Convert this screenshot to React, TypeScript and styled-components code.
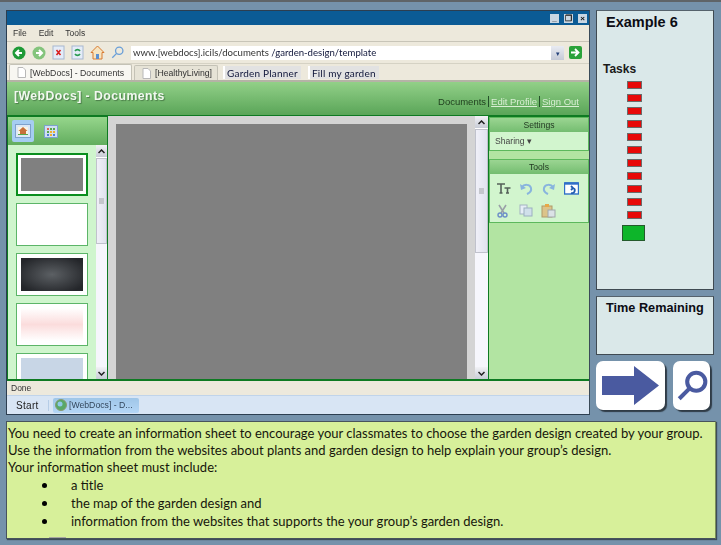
import React from 'react'
import styled, { createGlobalStyle } from 'styled-components'

const GlobalStyle = createGlobalStyle`
  html, body {
    margin: 0;
    padding: 0;
    background: #7592ab;
    overflow: hidden;
  }
`

const ui = '"Liberation Sans", Arial, sans-serif'
const body = 'Lato, "Noto Sans", sans-serif'

const Page = styled.div`
  width: 721px;
  height: 545px;
  box-sizing: border-box;
  border-top: 2px solid #5f6468;
  padding: 8px 0 0 6px;
  display: flex;
  flex-direction: column;
  gap: 6px;
  position: relative;
  font-family: ${ui};
`
const TopRow = styled.div`
  display: flex;
  gap: 6px;
  height: 405px;
`
const Win = styled.section`
  width: 584px;
  box-sizing: border-box;
  border: 1px solid #2c3e50;
  border-right-color: #3a4a58;
  display: flex;
  flex-direction: column;
  background: #ede9dc;
  filter: blur(0.3px);
`
const TitleBar = styled.div`
  height: 14px;
  background: #0b5b95;
  display: flex;
  justify-content: flex-end;
  align-items: center;
  gap: 5px;
  padding-right: 2px;
`
const WinBtn = styled.div`
  width: 9px;
  height: 9px;
  background: #c9d6e2;
  color: #111;
  font-size: 8px;
  font-weight: bold;
  line-height: 9px;
  text-align: center;
`
const MenuBar = styled.div`
  height: 16px;
  display: flex;
  align-items: center;
  gap: 12px;
  padding-left: 6px;
  font-size: 8.5px;
  color: #333;
  border-bottom: 1px solid #c8c5b8;
`
const ToolBar = styled.div`
  height: 21px;
  display: flex;
  align-items: center;
  padding-left: 5px;
  border-bottom: 1px solid #d5d2c4;
`
const ToolIcons = styled.div`
  display: flex;
  gap: 6px;
  align-items: center;
  width: 119px;
`
const Address = styled.div`
  width: 433px;
  height: 14px;
  background: #fff;
  font-family: ${body};
  font-size: 9.6px;
  color: #333;
  line-height: 14px;
  padding-left: 2px;
  box-sizing: border-box;
  position: relative;
  white-space: pre;
`
const AddressPath = styled.span`
  color: #10163a;
`
const Drop = styled.div`
  position: absolute;
  right: 0;
  top: 0;
  width: 13px;
  height: 14px;
  background: linear-gradient(#e8ebf2, #c5cad6);
  color: #23407a;
  font-size: 7px;
  line-height: 14px;
  text-align: center;
`
const Go = styled.div`
  margin-left: 5px;
  width: 13px;
  height: 13px;
  background: #2aa23a;
  border-radius: 2px;
  display: flex;
  align-items: center;
  justify-content: center;
`
const TabRow = styled.div`
  height: 16px;
  display: flex;
  align-items: flex-end;
  padding-left: 2px;
  border-bottom: 2px solid #b5b3a6;
`
const Tab = styled.div<{ $active?: boolean }>`
  height: ${p => (p.$active ? 16 : 15)}px;
  width: ${p => (p.$active ? 123 : 84)}px;
  margin-right: ${p => (p.$active ? 2 : 3)}px;
  box-sizing: border-box;
  background: ${p => (p.$active ? '#f8f7f2' : '#e6e3d6')};
  border: 1px solid #c4c2b6;
  border-bottom: none;
  border-radius: 2px 2px 0 0;
  display: flex;
  align-items: center;
  gap: 4px;
  padding-left: 7px;
  font-size: 8.7px;
  color: #333;
`
const PlainTab = styled.div<{ $ml: number }>`
  margin-left: ${p => p.$ml}px;
  height: 13px;
  margin-bottom: 1px;
  box-sizing: border-box;
  background: #e2e2e2;
  border-left: 2px solid #fff;
  font-family: ${body};
  font-size: 10px;
  line-height: 14px;
  padding: 0 3px 0 2px;
  color: #10163a;
  letter-spacing: 0.2px;
  white-space: nowrap;
`
const Header = styled.header`
  height: 34px;
  background: linear-gradient(#92d088, #5aa558);
  border-bottom: 1px solid #0e7a22;
  display: flex;
  justify-content: space-between;
  padding: 7px 8px 0 7px;
  box-sizing: border-box;
`
const HeaderTitle = styled.h1`
  margin: 0;
  font-size: 12.3px;
  font-weight: bold;
  color: #f2f8f0;
  letter-spacing: 0.42px;
  text-shadow: 1px 1px 1px #4a7d48;
`
const HeaderLinks = styled.nav`
  display: flex;
  align-items: center;
  align-self: flex-end;
  margin-bottom: 8px;
  font-size: 9.5px;
`
const HeaderLink = styled.span<{ $current?: boolean }>`
  color: ${p => (p.$current ? '#20401f' : '#d9efd4')};
  text-decoration: ${p => (p.$current ? 'none' : 'underline')};
  padding: 0 2px;
  & + & {
    border-left: 1px solid #24502a;
  }
`
const Main = styled.main`
  height: 263px;
  display: flex;
  border-bottom: 2px solid #0e7a22;
  overflow: hidden;
  background: #b2e4a2;
`
const LeftPanel = styled.aside`
  width: 101px;
  box-sizing: border-box;
  border: 1px solid #0e7a22;
  border-bottom: none;
  display: flex;
  flex-direction: column;
`
const LeftTools = styled.div`
  height: 28px;
  flex: none;
  background: linear-gradient(#96d68c, #62ad5e);
  display: flex;
  align-items: center;
  gap: 10px;
  padding-left: 4px;
`
const ToolActive = styled.div`
  width: 22px;
  height: 22px;
  border-radius: 2px;
  background: #a6cdf2;
  display: flex;
  align-items: center;
  justify-content: center;
`
const LeftBody = styled.div`
  flex: 1;
  display: flex;
  min-height: 0;
  background: #cff5cd;
`
const Thumbs = styled.div`
  width: 88px;
  padding: 8px 0 0 8px;
  box-sizing: border-box;
  overflow: hidden;
  display: flex;
  flex-direction: column;
  gap: 7px;
`
const Thumb = styled.div<{ $selected?: boolean }>`
  width: 72px;
  height: 43px;
  flex: none;
  box-sizing: border-box;
  background: #fff;
  border: ${p => (p.$selected ? '2px solid #0a8f1e' : '1px solid #5cb568')};
  padding: ${p => (p.$selected ? '3px 3px' : '4px')};
  display: flex;
`
const ThumbArt = styled.div<{ $bg: string }>`
  flex: 1;
  background: ${p => p.$bg};
`
const Scroll = styled.div<{ $w: number }>`
  width: ${p => p.$w}px;
  flex: none;
  background: #fff;
  display: flex;
  flex-direction: column;
`
const ScrollBtn = styled.div`
  height: 12px;
  flex: none;
  background: linear-gradient(#f2f2f6, #c8ccd6);
  display: flex;
  align-items: center;
  justify-content: center;
`
const ScrollThumb = styled.div<{ $h: number }>`
  height: ${p => p.$h}px;
  flex: none;
  margin-top: 1px;
  box-sizing: border-box;
  background: linear-gradient(90deg, #f0f0f8, #e0e2ee);
  border: 1px solid #c0c2cc;
  display: flex;
  align-items: center;
  justify-content: center;
`
const Grip = styled.div`
  width: 5px;
  height: 6px;
  background: #c4c6cc;
`
const Spacer = styled.div`
  flex: 1;
  background: #f6f6fc;
`
const Center = styled.div`
  flex: 1;
  display: flex;
  background: #d4d4d4;
`
const Canvas = styled.div`
  flex: 1;
  margin: 8px 8px 0;
  background: #808080;
`
const RightPanel = styled.aside`
  width: 101px;
  box-sizing: border-box;
  border-left: 1px solid #0e7a22;
  border-top: 1px solid #0e7a22;
  display: flex;
  flex-direction: column;
  gap: 8px;
`
const Box = styled.div<{ $h: number }>`
  height: ${p => p.$h}px;
  box-sizing: border-box;
  border: 1px solid #5cb85c;
  background: #d2f5ce;
`
const BoxHead = styled.div`
  height: 14px;
  background: linear-gradient(#9bd592, #74bd70);
  font-size: 8.6px;
  line-height: 14px;
  text-align: center;
  color: #233a23;
`
const Sharing = styled.div`
  padding: 4px 0 0 5px;
  font-size: 8.6px;
  color: #444;
`
const ToolGrid = styled.div`
  display: grid;
  grid-template-columns: repeat(4, 15px);
  column-gap: 7.5px;
  row-gap: 8px;
  padding: 8px 0 0 6px;
`
const Status = styled.div`
  height: 14px;
  font-size: 8.5px;
  line-height: 14px;
  padding-left: 4px;
  color: #333;
  border-bottom: 1px solid #c0d4ea;
`
const Taskbar = styled.footer`
  flex: 1;
  background: #d8e5f4;
  display: flex;
  align-items: center;
  padding-left: 9px;
  font-size: 10px;
  color: #222;
`
const Start = styled.span`
  width: 32px;
  letter-spacing: 0.3px;
  border-right: 1px solid #b6cde6;
  margin-right: 4px;
`
const TaskBtn = styled.div`
  width: 86px;
  height: 15px;
  background: linear-gradient(#9fc6e8, #b4d6f6);
  border-radius: 2px;
  display: flex;
  align-items: center;
  gap: 2px;
  padding-left: 2px;
  box-sizing: border-box;
  font-size: 8.7px;
  color: #33475c;
`
const Side = styled.div`
  width: 118px;
  display: flex;
  flex-direction: column;
  gap: 6px;
`
const SidePanel = styled.div<{ $h: number }>`
  height: ${p => p.$h}px;
  box-sizing: border-box;
  background: #dae8e9;
  border: 1px solid #3f4a52;
  border-top-color: #55626c;
`
const ExampleTitle = styled.h2`
  margin: 3px 0 0 9px;
  font-size: 14.5px;
  color: #0c0c14;
`
const TasksLabel = styled.div`
  margin: 32px 0 0 6px;
  font-size: 12px;
  font-weight: bold;
  color: #1a1a1a;
`
const Bars = styled.div`
  margin: 5px 0 0 30px;
  display: flex;
  flex-direction: column;
  gap: 5px;
`
const Bar = styled.div`
  width: 15px;
  height: 8px;
  box-sizing: border-box;
  background: #e80808;
  border: 1px solid #6a6a6a;
`
const GreenBlock = styled.div`
  width: 23px;
  height: 16px;
  box-sizing: border-box;
  margin: 6px 0 0 25px;
  background: #0db52a;
  border: 1px solid #245a2c;
`
const TimeTitle = styled.div`
  margin: 4px 0 0 9px;
  font-size: 12.7px;
  font-weight: bold;
  color: #0c0c14;
`
const ButtonRow = styled.div`
  display: flex;
  gap: 8px;
`
const SquareBtn = styled.button<{ $w: number }>`
  width: ${p => p.$w}px;
  height: 49px;
  padding: 0;
  border: none;
  border-radius: 7px;
  background: #fff;
  box-shadow: 2px 2px 1px #2f3b46;
  display: flex;
  align-items: center;
  justify-content: center;
`
const Instructions = styled.section`
  width: 710px;
  height: 118px;
  box-sizing: border-box;
  background: #d7f09a;
  border: 1px solid #47535c;
  border-right-color: #7a8f5a;
  box-shadow: 1px 1px 1px #3e4c58;
  padding: 3px 0 0 1px;
  font-family: ${body};
  font-size: 13px;
  line-height: 17px;
  color: #16160c;
  position: relative;
`
const Line = styled.p`
  margin: 0;
  white-space: nowrap;
`
const BulletList = styled.ul`
  list-style: none;
  margin: 0;
  padding: 0;
`
const BulletItem = styled.li`
  height: 18px;
  line-height: 18px;
  display: flex;
  align-items: center;
`
const Dot = styled.span`
  width: 5px;
  height: 5px;
  border-radius: 50%;
  background: #000;
  margin: 0 24px 0 34px;
`
const Mark = styled.div`
  position: absolute;
  left: 42px;
  bottom: 0;
  width: 17px;
  height: 1px;
  background: #a8a8a0;
`

const PageIcon = () => (
  <svg width="9" height="11" viewBox="0 0 9 11">
    <path d="M1 .5h5l2.5 2.5v7.5H1z" fill="#fff" stroke="#b8b8b8" />
  </svg>
)

const Chevron = ({ up }: { up?: boolean }) => (
  <svg width="7" height="5" viewBox="0 0 7 5">
    <path d={up ? 'M.5 4l3-3 3 3' : 'M.5 1l3 3 3-3'} fill="none" stroke="#222" strokeWidth="1.5" />
  </svg>
)

const NavCircle = ({ fill, flip }: { fill: string; flip?: boolean }) => (
  <svg width="14" height="14" viewBox="0 0 14 14">
    <circle cx="7" cy="7" r="6.5" fill={fill} />
    <path d={flip ? 'M4 7h5M7 4l3 3-3 3' : 'M10 7H5M7 4L4 7l3 3'} fill="none" stroke="#fff" strokeWidth="2" />
  </svg>
)

const DocIcon = ({ color, glyph }: { color: string; glyph: string }) => (
  <svg width="13" height="15" viewBox="0 0 13 15">
    <rect x="1" y="1" width="11" height="13" fill="#e4ecf8" stroke="#a8b8d0" />
    <path d={glyph} fill="none" stroke={color} strokeWidth="1.6" />
  </svg>
)

const HomeIcon = () => (
  <svg width="15" height="15" viewBox="0 0 15 15">
    <path d="M7.5 1L1 7.5h2V14h9V7.5h2z" fill="#f6e4c0" stroke="#d87a30" />
    <rect x="6" y="9" width="3" height="5" fill="#5a8fd0" />
  </svg>
)

const SearchIcon = ({ size, stroke, width }: { size: number; stroke: string; width: number }) => (
  <svg width={size} height={size} viewBox="0 0 30 30">
    <circle cx="19" cy="11" r="8.5" fill="none" stroke={stroke} strokeWidth={width} />
    <path d="M13 17L3 27" stroke={stroke} strokeWidth={width} />
  </svg>
)

const PictureTool = () => (
  <svg width="16" height="14" viewBox="0 0 16 14">
    <rect x=".5" y=".5" width="15" height="13" fill="#dce8f6" stroke="#7ea2cc" />
    <rect x="3" y="3" width="10" height="8" fill="#f8f4e4" />
    <path d="M8 3L3.5 7h1.5v4h6V7h1.5z" fill="#c8703a" />
    <path d="M3 10h10v1H3z" fill="#58a848" />
  </svg>
)

const TableTool = () => (
  <svg width="14" height="13" viewBox="0 0 14 13">
    <rect x=".5" y=".5" width="13" height="12" fill="#cfdff2" stroke="#7ea2cc" />
    <path d="M3 3h2v2H3z" fill="#e06050" />
    <path d="M6 3h2v2H6z" fill="#58a848" />
    <path d="M9 3h2v2H9z" fill="#58a848" />
    <path d="M3 6h2v2H3z" fill="#58a848" />
    <path d="M6 6h2v2H6z" fill="#f0b030" />
    <path d="M9 6h2v2H9z" fill="#f0b030" />
    <path d="M3 9h2v2H3z" fill="#5080d0" />
    <path d="M6 9h2v2H6z" fill="#f0b030" />
    <path d="M9 9h2v2H9z" fill="#5080d0" />
  </svg>
)

const UndoIcon = ({ flip }: { flip?: boolean }) => (
  <svg width="15" height="13" viewBox="0 0 15 13" style={flip ? { transform: 'scaleX(-1)' } : undefined}>
    <path d="M3 5c2-3 8-3 9 1s-2 5-4 6" fill="none" stroke="#88b4de" strokeWidth="2" />
    <path d="M1 2l1 6 5-2z" fill="#88b4de" />
  </svg>
)

const TextTool = () => (
  <svg width="15" height="13" viewBox="0 0 15 13">
    <path d="M1 2h8M5 2v9M3.5 11h3M8.5 6h6M11.5 6v5M10 11h3" fill="none" stroke="#55605a" strokeWidth="1.6" />
  </svg>
)

const PageTool = () => (
  <svg width="15" height="14" viewBox="0 0 15 14">
    <rect x=".5" y="1" width="14" height="11" fill="#fff" stroke="#2f6fc8" strokeWidth="1.4" />
    <path d="M.5 1.5h14" stroke="#2f6fc8" strokeWidth="2.4" />
    <path d="M7 11c4 1 5-4 2-5M7 4l2 2-2 2" fill="none" stroke="#1f5cb0" strokeWidth="1.8" />
  </svg>
)

const CutTool = () => (
  <svg width="13" height="14" viewBox="0 0 13 14">
    <path d="M3 1l5 8M10 1L5 9" stroke="#9aa0a8" strokeWidth="1.6" />
    <circle cx="4" cy="11" r="2" fill="none" stroke="#6d8fc8" strokeWidth="1.4" />
    <circle cx="9" cy="11" r="2" fill="none" stroke="#6d8fc8" strokeWidth="1.4" />
  </svg>
)

const CopyTool = () => (
  <svg width="14" height="13" viewBox="0 0 14 13">
    <rect x="1" y="1" width="7" height="9" fill="#e6eef6" stroke="#a4b4c2" />
    <rect x="5" y="4" width="8" height="8" fill="#d0e0ea" stroke="#9cb0c0" />
  </svg>
)

const PasteTool = () => (
  <svg width="15" height="14" viewBox="0 0 15 14">
    <rect x="1" y="2" width="10" height="11" fill="#dcc48a" stroke="#b09a68" />
    <rect x="4" y="0" width="4" height="3" fill="#e8a848" />
    <rect x="7" y="6" width="7" height="7" fill="#dbe2e6" stroke="#a0a8ac" />
  </svg>
)

const tasks = Array.from({ length: 11 }, (_, i) => i)

const thumbs = [
  '#808080',
  '#ffffff',
  'radial-gradient(ellipse at center, #5c6064, #24262a 85%)',
  'linear-gradient(#fff, #fbdcdc 50%, #fff)',
  '#c8d6e6'
]

const App: React.FC = () => (
  <Page>
    <GlobalStyle />
    <TopRow>
      <Win>
        <TitleBar>
          <WinBtn>_</WinBtn>
          <WinBtn>❐</WinBtn>
          <WinBtn>×</WinBtn>
        </TitleBar>
        <MenuBar>
          <span>File</span>
          <span>Edit</span>
          <span>Tools</span>
        </MenuBar>
        <ToolBar>
          <ToolIcons>
            <NavCircle fill="#1e9a36" />
            <NavCircle fill="#84c47c" flip />
            <DocIcon color="#d82020" glyph="M4.5 5l4 5M8.5 5l-4 5" />
            <DocIcon color="#2a9a50" glyph="M4 6a3 3 0 0 1 5 0M9 9a3 3 0 0 1-5 0" />
            <HomeIcon />
            <SearchIcon size={13} stroke="#6a9fd8" width={3} />
          </ToolIcons>
          <Address>
            www.[webdocs].icils/documents <AddressPath>/garden-design/template</AddressPath>
            <Drop>▾</Drop>
          </Address>
          <Go>
            <svg width="9" height="9" viewBox="0 0 9 9">
              <path d="M0 4.5h6M4 1l3.5 3.5L4 8" fill="none" stroke="#fff" strokeWidth="1.8" />
            </svg>
          </Go>
        </ToolBar>
        <TabRow>
          <Tab $active>
            <PageIcon />
            [WebDocs] - Documents
          </Tab>
          <Tab>
            <PageIcon />
            [HealthyLiving]
          </Tab>
          <PlainTab $ml={2}>Garden Planner</PlainTab>
          <PlainTab $ml={7}>Fill my garden</PlainTab>
        </TabRow>
        <Header>
          <HeaderTitle>[WebDocs] - Documents</HeaderTitle>
          <HeaderLinks>
            <HeaderLink $current>Documents</HeaderLink>
            <HeaderLink>Edit Profile</HeaderLink>
            <HeaderLink>Sign Out</HeaderLink>
          </HeaderLinks>
        </Header>
        <Main>
          <LeftPanel>
            <LeftTools>
              <ToolActive>
                <PictureTool />
              </ToolActive>
              <TableTool />
            </LeftTools>
            <LeftBody>
              <Thumbs>
                {thumbs.map((bg, i) => (
                  <Thumb key={i} $selected={i === 0}>
                    <ThumbArt $bg={bg} />
                  </Thumb>
                ))}
              </Thumbs>
              <Scroll $w={11}>
                <ScrollBtn><Chevron up /></ScrollBtn>
                <ScrollThumb $h={86}>
                  <Grip />
                </ScrollThumb>
                <Spacer />
                <ScrollBtn><Chevron /></ScrollBtn>
              </Scroll>
            </LeftBody>
          </LeftPanel>
          <Center>
            <Canvas />
            <Scroll $w={13}>
              <ScrollBtn><Chevron up /></ScrollBtn>
              <ScrollThumb $h={124}>
                <Grip />
              </ScrollThumb>
              <Spacer />
              <ScrollBtn><Chevron /></ScrollBtn>
            </Scroll>
          </Center>
          <RightPanel>
            <Box $h={34}>
              <BoxHead>Settings</BoxHead>
              <Sharing>Sharing ▾</Sharing>
            </Box>
            <Box $h={64}>
              <BoxHead>Tools</BoxHead>
              <ToolGrid>
                <TextTool />
                <UndoIcon />
                <UndoIcon flip />
                <PageTool />
                <CutTool />
                <CopyTool />
                <PasteTool />
              </ToolGrid>
            </Box>
          </RightPanel>
        </Main>
        <Status>Done</Status>
        <Taskbar>
          <Start>Start</Start>
          <TaskBtn>
            <svg width="12" height="12" viewBox="0 0 12 12">
              <circle cx="6" cy="6" r="5.5" fill="#58a868" stroke="#8a9a70" />
              <circle cx="5" cy="5" r="2.5" fill="#8fc8e8" />
            </svg>
            [WebDocs] - D...
          </TaskBtn>
        </Taskbar>
      </Win>
      <Side>
        <SidePanel $h={280}>
          <ExampleTitle>Example 6</ExampleTitle>
          <TasksLabel>Tasks</TasksLabel>
          <Bars>
            {tasks.map(i => (
              <Bar key={i} />
            ))}
          </Bars>
          <GreenBlock />
        </SidePanel>
        <SidePanel $h={59}>
          <TimeTitle>Time Remaining</TimeTitle>
        </SidePanel>
        <ButtonRow>
          <SquareBtn $w={69}>
            <svg width="58" height="40" viewBox="0 0 58 40">
              <path d="M0 10h32V0l25 19.5L32 39V29H0z" fill="#4a5aa0" />
            </svg>
          </SquareBtn>
          <SquareBtn $w={37}>
            <SearchIcon size={32} stroke="#4a5aa0" width={3.8} />
          </SquareBtn>
        </ButtonRow>
      </Side>
    </TopRow>
    <Instructions>
      <Line>You need to create an information sheet to encourage your classmates to choose the garden design created by your group.</Line>
      <Line>Use the information from the websites about plants and garden design to help explain your group’s design.</Line>
      <Line>Your information sheet must include:</Line>
      <BulletList>
        <BulletItem><Dot />a title</BulletItem>
        <BulletItem><Dot />the map of the garden design and</BulletItem>
        <BulletItem><Dot />information from the websites that supports the your group’s garden design.</BulletItem>
      </BulletList>
      <Mark />
    </Instructions>
  </Page>
)

export default App
